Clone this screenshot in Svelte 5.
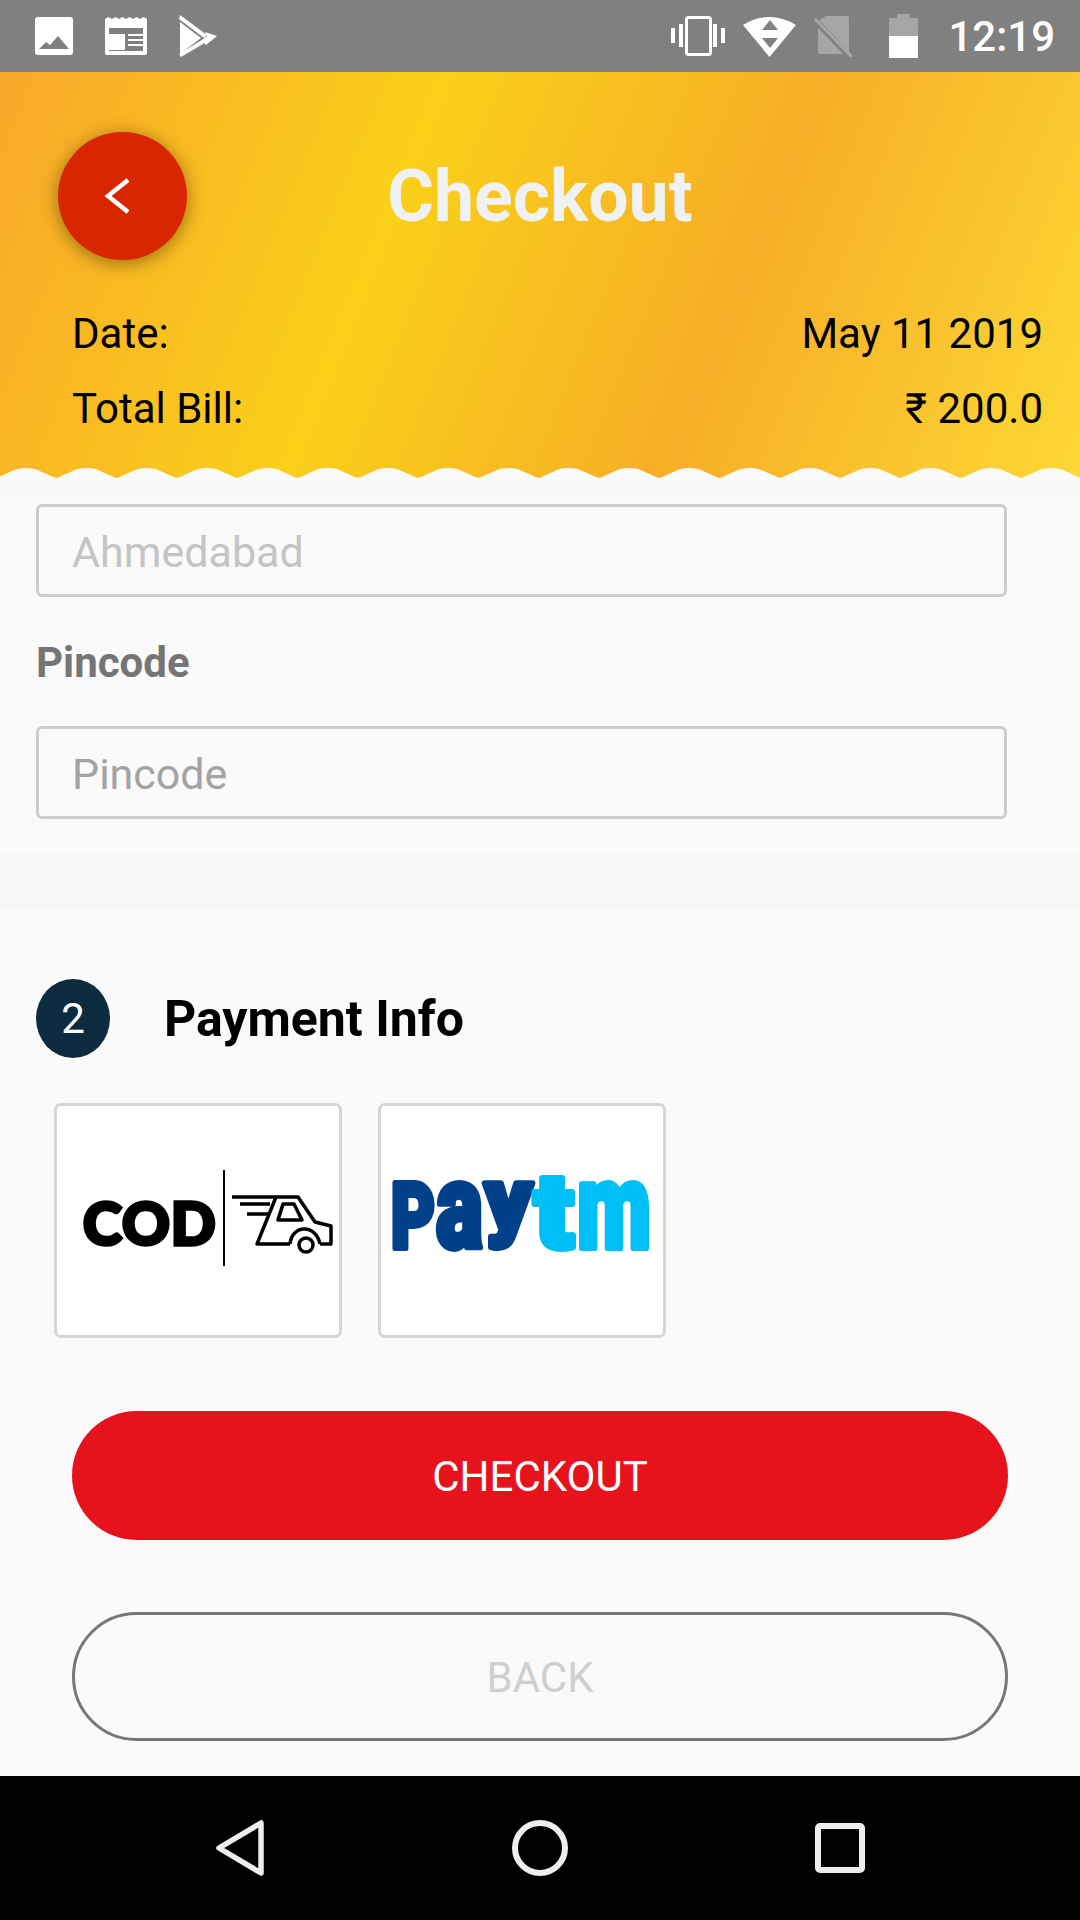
<script>
  const waveWidth = 1080;
  let wave = 'M-4 12';
  for (let x = -4; x < waveWidth; x += 60.3) {
    wave += ' c14 -5 18 -10 30 -10 s16 5 30.3 10';
  }
  wave += ' V16 H-4 Z';
</script>

<div class="screen">
  <div class="status">
    <div class="status-left">
      <svg width="38" height="38" viewBox="0 0 38 38">
        <rect width="38" height="38" rx="3" fill="#fff" />
        <path d="M4 32 L11 25 L15 28 L23 19 L34 32 Z" fill="#808080" />
      </svg>
      <svg width="42" height="38" viewBox="0 0 42 38">
        <path d="M0 2 L3.5 0 L7 2 L10.500 0 L14 2 L17.500 0 L21 2 L24.500 0 L28 2 L31.500 0 L35 2 L38.500 0 L42 2 V36 Q42 38 40 38 H2 Q0 38 0 36 Z" fill="#fff" />
        <rect x="4" y="11" width="34" height="23" fill="#808080" />
        <rect x="4" y="17" width="16" height="16" fill="#fff" />
        <path d="M23 18 H38 M23 23 H38 M23 28 H38" stroke="#fff" stroke-width="2" />
      </svg>
      <svg width="39" height="42" viewBox="0 0 39 42">
        <path d="M1 7 L22 23 L1 39 Z" fill="#fff" />
        <path d="M1 0 L28 20 L25 23 L0 4 Z M2 42 L29 26 L26 23 L0 39 Z" fill="#fff" />
        <path d="M26 17 L38 21 L27 30 L23 25 L28 21 Z" fill="#fff" />
      </svg>
    </div>
    <div class="status-right">
      <svg width="54" height="42" viewBox="0 0 54 42">
        <rect x="15.500" y="2.500" width="24" height="37" rx="2" fill="none" stroke="#fff" stroke-width="3" />
        <path d="M2 13 V28 M10 9 V32 M44 9 V32 M52 13 V28" stroke="#fff" stroke-width="4" />
      </svg>
      <svg width="53" height="42" viewBox="0 0 53 42">
        <path d="M0 10 Q26 -6 53 10 L26.500 42 Z" fill="#fff" />
        <path d="M27 5 L35 15 H19 Z M19 23 H35 L27 33 Z" fill="#808080" />
      </svg>
      <svg width="38" height="42" viewBox="0 0 38 42">
        <path d="M4 6 L12 1 H33 Q35 1 35 3 V39 H6 Q4 39 4 37 Z" fill="#a6a6a6" />
        <path d="M-2 2 L38 44" stroke="#808080" stroke-width="6" />
        <path d="M1 4 L38 42" stroke="#a6a6a6" stroke-width="3" />
      </svg>
      <svg width="29" height="44" viewBox="0 0 29 44">
        <path d="M8 0 H21 V4 H29 V22 H0 V4 H8 Z" fill="#a6a6a6" />
        <rect y="22" width="29" height="22" fill="#fff" />
      </svg>
      <span class="time">12:19</span>
    </div>
  </div>

  <header class="head">
    <div class="title-row">
      <button class="round-back" aria-label="back">
        <svg width="129" height="128" viewBox="0 0 129 128">
          <path d="M70 48 L50 64 L70 80" fill="none" stroke="#fff" stroke-width="4.500" />
        </svg>
      </button>
      <h1>Checkout</h1>
      <div></div>
    </div>
    <div class="bill-row"><span>Date:</span><span>May 11 2019</span></div>
    <div class="bill-row"><span>Total Bill:</span><span>₹ 200.0</span></div>
    <svg class="wave" width="1080" height="16" viewBox="0 0 1080 16">
      <path d={wave} fill="#fafafa" />
    </svg>
  </header>

  <main>
    <section class="address">
      <input type="text" class="city" value="Ahmedabad" readonly />
      <div class="field-label">Pincode</div>
      <input type="text" placeholder="Pincode" readonly />
    </section>

    <div class="band"></div>

    <section class="payment">
      <div class="step">
        <span class="step-no">2</span>
        <h2>Payment Info</h2>
      </div>
      <div class="methods">
        <div class="method">
          <svg width="282" height="229" viewBox="0 0 282 229">
            <text class="cod" x="26" y="139">COD</text>
            <path d="M167 64 V160" stroke="#000" stroke-width="2" />
            <g fill="none" stroke="#000" stroke-width="3.500" stroke-linejoin="round">
              <path d="M175 91 H241 L258 116 L274 120 V138 H263 M233 138 H200 L219 91" />
              <path d="M183 98 H213 M190 108 H211" />
              <path d="M221 114 L226 98 H237 L245 114 Z" />
              <path d="M233 138 C235 118 259 118 263 138" />
              <circle cx="249" cy="139" r="7" />
            </g>
          </svg>
        </div>
        <div class="method">
          <svg width="282" height="229" viewBox="0 0 282 229">
            <g class="logo-text">
              <text class="navy" x="10" y="142" font-size="91" textLength="44" lengthAdjust="spacingAndGlyphs">P</text>
              <text class="navy" x="55" y="142" font-size="120" textLength="47" lengthAdjust="spacingAndGlyphs">a</text>
              <text class="navy" x="104" y="123" font-size="88" textLength="47" lengthAdjust="spacingAndGlyphs">y</text>
              <text class="sky" x="153" y="142" font-size="105" textLength="40" lengthAdjust="spacingAndGlyphs">t</text>
              <text class="sky" x="196" y="142" font-size="120" textLength="74" lengthAdjust="spacingAndGlyphs">m</text>
            </g>
          </svg>
        </div>
      </div>
      <button class="btn primary">CHECKOUT</button>
      <button class="btn outline">BACK</button>
    </section>
  </main>

  <nav class="softkeys">
    <svg width="48" height="56" viewBox="0 0 48 56">
      <path d="M45 3 V53 L3 28 Z" fill="none" stroke="#eee" stroke-width="5.500" stroke-linejoin="round" />
    </svg>
    <svg width="56" height="56" viewBox="0 0 56 56">
      <circle cx="28" cy="28" r="25" fill="none" stroke="#eee" stroke-width="6" />
    </svg>
    <svg width="50" height="50" viewBox="0 0 50 50">
      <rect x="3" y="3" width="44" height="44" rx="2" fill="none" stroke="#eee" stroke-width="6" />
    </svg>
  </nav>
</div>

<style>
  :global(body) {
    margin: 0;
    background: #fafafa;
  }

  .screen {
    width: 1080px;
    height: 1920px;
    display: flex;
    flex-direction: column;
    font-family: Roboto, "Liberation Sans", sans-serif;
    overflow: hidden;
  }

  .status {
    height: 72px;
    flex: none;
    background: #808080;
    display: flex;
    justify-content: space-between;
    align-items: center;
    padding: 0 25px 0 35px;
    box-sizing: border-box;
  }

  .status-left,
  .status-right {
    display: flex;
    align-items: center;
  }

  .status-left {
    gap: 32px;
  }

  .status-right {
    gap: 18px;
  }

  .status-right svg:nth-child(3) {
    margin-right: 19px;
  }

  .time {
    color: #fff;
    font-size: 42px;
    font-weight: 500;
    margin-left: 12px;
  }

  .head {
    position: relative;
    height: 406px;
    flex: none;
    box-sizing: border-box;
    padding: 61px 37px 0 72px;
    background: linear-gradient(112deg, #f9a72a 0%, #fad019 36%, #f6ae26 66%, #fdd835 100%);
  }

  .title-row {
    display: grid;
    grid-template-columns: 1fr auto 1fr;
    align-items: center;
    height: 128px;
    margin: -1px -37px 36px -72px;
    padding-left: 58px;
  }

  .round-back {
    width: 129px;
    height: 128px;
    padding: 0;
    border: 0;
    border-radius: 50%;
    background: #d92600;
    box-shadow: 0 3px 18px rgba(70, 50, 0, 0.55);
  }

  .round-back svg {
    display: block;
  }

  h1 {
    margin: 0;
    padding-top: 2px;
    color: #eff1f3;
    font-size: 71.500px;
    font-weight: 700;
    line-height: 1;
    transform: translateX(-29px);
  }

  .bill-row {
    display: flex;
    justify-content: space-between;
    height: 75px;
    line-height: 75px;
    font-size: 42px;
    color: #000;
  }

  .wave {
    position: absolute;
    left: 0;
    bottom: -4px;
  }

  main {
    flex: 1;
    background: linear-gradient(#f6f6f6, #fafafa 24px) no-repeat;
    background-color: #fafafa;
  }

  .address {
    padding: 26px 73px 35px 36px;
  }

  input {
    display: block;
    width: 100%;
    height: 93px;
    box-sizing: border-box;
    padding: 3px 33px 0;
    border: 3px solid #cdcdcd;
    border-radius: 6px;
    background: transparent;
    font-family: inherit;
    font-size: 43px;
    color: #a3a3a3;
    outline: none;
  }

  input::placeholder {
    color: #a3a3a3;
    opacity: 1;
  }

  input.city {
    color: #c4c4c4;
  }

  .field-label {
    margin: 42px 0 39px;
    height: 48px;
    line-height: 48px;
    font-size: 42px;
    font-weight: 700;
    color: #757575;
  }

  .band {
    height: 54px;
    background: #f7f7f7;
  }

  .payment {
    padding: 71px 72px 0 36px;
  }

  .step {
    display: flex;
    align-items: center;
    gap: 54px;
  }

  .step-no {
    width: 74px;
    height: 79px;
    flex: none;
    border-radius: 50%;
    background: #0d2b3e;
    color: #fff;
    font-size: 42px;
    line-height: 79px;
    text-align: center;
  }

  h2 {
    margin: 0;
    font-size: 50px;
    font-weight: 700;
    color: #000;
  }

  .methods {
    display: flex;
    gap: 36px;
    margin: 45px 0 73px 18px;
  }

  .method {
    width: 288px;
    height: 235px;
    box-sizing: border-box;
    border: 3px solid #d5d5d5;
    border-radius: 7px;
    background: #fff;
  }

  .method svg {
    display: block;
  }

  .cod {
    font-family: Lato, "Open Sans", sans-serif;
    font-size: 59px;
    font-weight: 900;
    fill: #000;
    stroke: #000;
    stroke-width: 3.500;
    letter-spacing: 1px;
  }

  .logo-text text {
    font-family: Roboto, sans-serif;
    font-weight: 900;
    stroke-width: 6;
    stroke-linejoin: round;
  }

  .navy {
    fill: #03408a;
    stroke: #03408a;
  }

  .sky {
    fill: #00bff7;
    stroke: #00bff7;
  }

  .btn {
    display: block;
    width: 936px;
    height: 129px;
    margin-left: 36px;
    box-sizing: border-box;
    border-radius: 65px;
    padding-top: 3px;
    font-family: inherit;
    font-size: 42px;
    font-weight: 400;
  }

  .primary {
    border: 0;
    background: #e7131c;
    color: #fff;
  }

  .outline {
    margin-top: 72px;
    border: 3px solid #777;
    background: transparent;
    color: #cfcfcf;
  }

  .softkeys {
    height: 144px;
    flex: none;
    background: #000;
    position: relative;
    display: grid;
    grid-template-columns: 216px 48px 248px 56px 247px 50px;
    align-items: center;
  }

  .softkeys svg:nth-child(1) {
    grid-column: 2;
  }

  .softkeys svg:nth-child(2) {
    grid-column: 4;
  }

  .softkeys svg:nth-child(3) {
    grid-column: 6;
  }
</style>
